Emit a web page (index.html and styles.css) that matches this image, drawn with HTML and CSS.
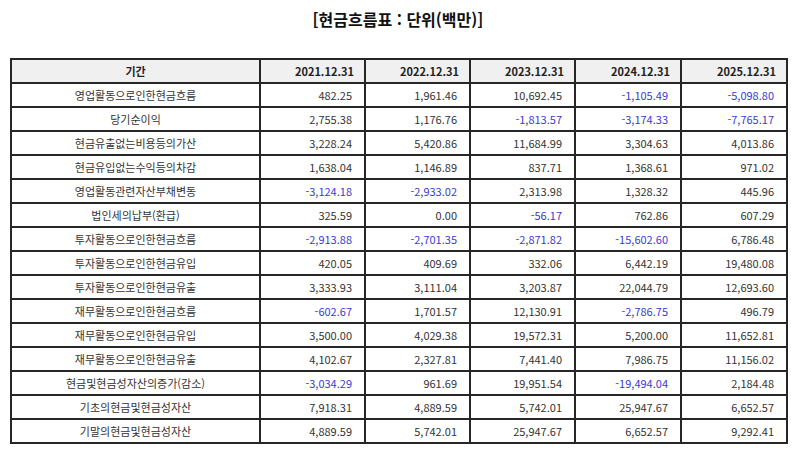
FILE: index.html
```html
<!DOCTYPE html>
<html lang="ko">
<head>
<meta charset="utf-8">
<title>현금흐름표</title>
<link rel="stylesheet" href="styles.css">
</head>
<body>
<div class="page">
  <h1 class="title">[현금흐름표 : 단위(백만)]</h1>
  <table class="cf">
    <colgroup>
      <col class="c-label"><col class="c-num"><col class="c-num"><col class="c-num"><col class="c-num6"><col class="c-num6">
    </colgroup>
    <thead>
      <tr><th class="lbl">기간</th><th>2021.12.31</th><th>2022.12.31</th><th>2023.12.31</th><th>2024.12.31</th><th>2025.12.31</th></tr>
    </thead>
    <tbody>
      <tr><td class="lbl">영업활동으로인한현금흐름</td><td>482.25</td><td>1,961.46</td><td>10,692.45</td><td class="neg">-1,105.49</td><td class="neg">-5,098.80</td></tr>
      <tr><td class="lbl">당기순이익</td><td>2,755.38</td><td>1,176.76</td><td class="neg">-1,813.57</td><td class="neg">-3,174.33</td><td class="neg">-7,765.17</td></tr>
      <tr><td class="lbl">현금유출없는비용등의가산</td><td>3,228.24</td><td>5,420.86</td><td>11,684.99</td><td>3,304.63</td><td>4,013.86</td></tr>
      <tr><td class="lbl">현금유입없는수익등의차감</td><td>1,638.04</td><td>1,146.89</td><td>837.71</td><td>1,368.61</td><td>971.02</td></tr>
      <tr><td class="lbl">영업활동관련자산부채변동</td><td class="neg">-3,124.18</td><td class="neg">-2,933.02</td><td>2,313.98</td><td>1,328.32</td><td>445.96</td></tr>
      <tr><td class="lbl">법인세의납부(환급)</td><td>325.59</td><td>0.00</td><td class="neg">-56.17</td><td>762.86</td><td>607.29</td></tr>
      <tr><td class="lbl">투자활동으로인한현금흐름</td><td class="neg">-2,913.88</td><td class="neg">-2,701.35</td><td class="neg">-2,871.82</td><td class="neg">-15,602.60</td><td>6,786.48</td></tr>
      <tr><td class="lbl">투자활동으로인한현금유입</td><td>420.05</td><td>409.69</td><td>332.06</td><td>6,442.19</td><td>19,480.08</td></tr>
      <tr><td class="lbl">투자활동으로인한현금유출</td><td>3,333.93</td><td>3,111.04</td><td>3,203.87</td><td>22,044.79</td><td>12,693.60</td></tr>
      <tr><td class="lbl">재무활동으로인한현금흐름</td><td class="neg">-602.67</td><td>1,701.57</td><td>12,130.91</td><td class="neg">-2,786.75</td><td>496.79</td></tr>
      <tr><td class="lbl">재무활동으로인한현금유입</td><td>3,500.00</td><td>4,029.38</td><td>19,572.31</td><td>5,200.00</td><td>11,652.81</td></tr>
      <tr><td class="lbl">재무활동으로인한현금유출</td><td>4,102.67</td><td>2,327.81</td><td>7,441.40</td><td>7,986.75</td><td>11,156.02</td></tr>
      <tr><td class="lbl">현금및현금성자산의증가(감소)</td><td class="neg">-3,034.29</td><td>961.69</td><td>19,951.54</td><td class="neg">-19,494.04</td><td>2,184.48</td></tr>
      <tr><td class="lbl">기초의현금및현금성자산</td><td>7,918.31</td><td>4,889.59</td><td>5,742.01</td><td>25,947.67</td><td>6,652.57</td></tr>
      <tr><td class="lbl">기말의현금및현금성자산</td><td>4,889.59</td><td>5,742.01</td><td>25,947.67</td><td>6,652.57</td><td>9,292.41</td></tr>
    </tbody>
  </table>
</div>
</body>
</html>
```

FILE: styles.css
```css
html, body {
  margin: 0;
  padding: 0;
  background: #ffffff;
}

.page {
  padding: 8px 8px 0 10px;
  font-family: "Noto Sans CJK KR", "Noto Sans", sans-serif;
  color: #333333;
}

.title {
  margin: 0 0 28px 0;
  height: 22px;
  line-height: 22px;
  font-size: 16px;
  font-weight: bold;
  color: #111111;
  text-align: center;
}

.cf {
  width: 776px;
  table-layout: fixed;
  border-collapse: collapse;
  font-size: 11px;
}

.c-label { width: 249px; }
.c-num { width: 105px; }
.c-num6 { width: 106px; }

.cf th,
.cf td {
  border: 2px solid #262626;
  height: 22px;
  padding: 0 12px 0 4px;
  text-align: right;
  white-space: nowrap;
  line-height: 1;
}

.cf td {
  font-size: 11px;
}

.cf th {
  background: #f0f0f0;
  font-weight: bold;
  color: #222222;
  font-size: 11px;
  padding-right: 10px;
}

.cf .lbl {
  text-align: center;
  padding: 0 4px;
  font-size: 11px;
}

.cf .neg {
  color: #3a3ad2;
}
```
